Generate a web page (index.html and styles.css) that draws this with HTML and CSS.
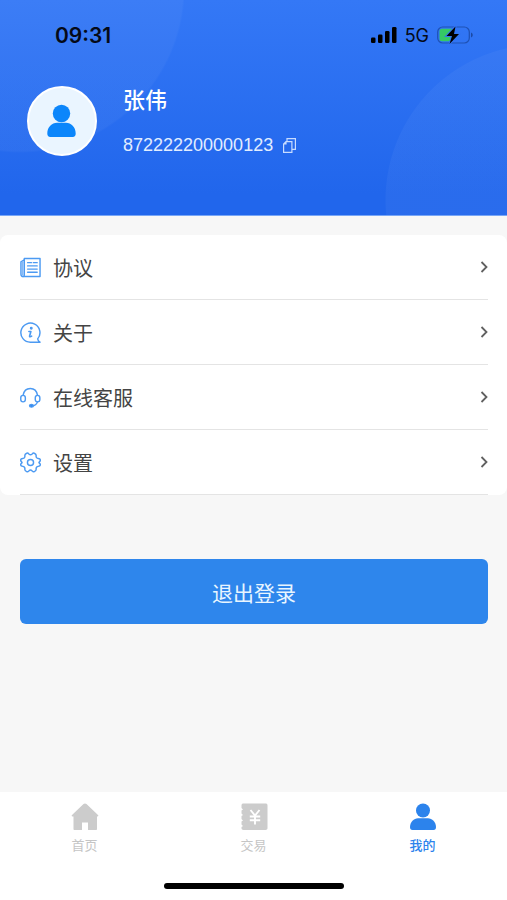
FILE: index.html
```html
<!DOCTYPE html>
<html lang="zh-CN">
<head>
<meta charset="utf-8">
<meta name="viewport" content="width=device-width, initial-scale=1">
<title>我的</title>
<link rel="stylesheet" href="styles.css">
</head>
<body>
<header class="hero">
  <div class="status">
    <span class="time">09:31</span>
    <div class="signals">
      <svg width="26" height="16" viewBox="0 0 26 16" aria-hidden="true">
        <rect x="0" y="10.500" width="4.500" height="5.500" rx="1.300"/><rect x="7" y="7.500" width="4.500" height="8.500" rx="1.300"/><rect x="14" y="4" width="4.500" height="12" rx="1.300"/><rect x="21" y="0" width="4.500" height="16" rx="1.300"/>
      </svg>
      <span class="network">5G</span>
      <svg width="36" height="18" viewBox="0 0 36 18" aria-hidden="true">
        <rect x=".7" y="1" width="31.600" height="16" rx="5" fill="none" stroke="#1f52b4" stroke-width="1.200"/>
        <path d="M5 2.800h11v12.400H5a2.500 2.500 0 0 1-2.500-2.500V5.300A2.500 2.500 0 0 1 5 2.800z" fill="#35c865"/>
        <path d="M34 6.500c2.300.8 2.300 4.200 0 5z" fill="#1c4aa5"/>
        <path d="M18.500.5 9.500 10h5.500l-2.500 8L22 8h-5z" stroke="#3273f2" stroke-width="2" paint-order="stroke"/>
      </svg>
    </div>
  </div>
  <div class="profile">
    <div class="avatar">
      <svg width="30" height="34" viewBox="0 0 30 34" aria-hidden="true"><circle cx="14.500" cy="9.500" r="8.700"/><path d="M.3 29.500C.3 23 5 18.800 10 18.800h9c5 0 9.700 4.200 9.700 10.700 0 2-1 3.500-3 3.500H3.300c-2 0-3-1.500-3-3.500z"/></svg>
    </div>
    <div class="identity">
      <h1 class="name">张伟</h1>
      <div class="account">
        <span>872222200000123</span>
        <button class="copy" type="button" aria-label="复制">
          <svg width="13" height="15" viewBox="0 0 13 15" aria-hidden="true"><path d="M3 3.600h5.900v10.800H.6V6z M.8 6H3V3.800M4 3.500V.6h8.400v10.800H9"/></svg>
        </button>
      </div>
    </div>
  </div>
</header>
<main class="content">
  <nav class="menu">
    <a class="row" href="#agreement">
      <svg class="icon" viewBox="0 0 22 22" aria-hidden="true"><path d="M4.500 1.500H21v19H3.500C1.800 20.500 1 19.500 1 18V5l3.500-2z"/><path d="M4.500 3v16c0 1-.5 1.500-1.300 1.500"/><path d="M2.700 5.500v13" stroke="#85b9f6" stroke-width="2"/><path d="M8 5.900h4m2 0h4M8 9.300h10M8 12.700h10M8 16h10"/></svg>
      <span>协议</span>
      <svg class="chevron" viewBox="0 0 8 12" aria-hidden="true"><path d="m1.500 1 5 5-5 5"/></svg>
    </a>
    <a class="row" href="#about">
      <svg class="icon" viewBox="0 0 22 22" aria-hidden="true"><path d="M18.500 17.700A10 10 0 1 0 11 21.200h10c-1.400-.7-2.200-1.800-2.500-3.500z"/><circle cx="11.800" cy="6.500" r=".8" fill="#3c8ff0"/><path d="M9.300 10h2.100L10 15c0 .8 1 .6 2.200-.2" stroke-width="1.700"/></svg>
      <span>关于</span>
      <svg class="chevron" viewBox="0 0 8 12" aria-hidden="true"><path d="m1.500 1 5 5-5 5"/></svg>
    </a>
    <a class="row" href="#service">
      <svg class="icon" viewBox="0 0 22 22" aria-hidden="true"><path d="M3.300 8.500C4 4.300 6.800 1.500 10.800 1.500s6.800 2.800 7.500 7"/><rect x=".8" y="8.800" width="4.800" height="6.800" rx="2.400"/><rect x="16" y="8.800" width="4.800" height="6.800" rx="2.400"/><path d="M18.300 15.600c-.8 2.700-3 4-6 4.300"/><ellipse cx="12" cy="19.700" rx="2" ry="1.400" fill="#2c83ec"/></svg>
      <span>在线客服</span>
      <svg class="chevron" viewBox="0 0 8 12" aria-hidden="true"><path d="m1.500 1 5 5-5 5"/></svg>
    </a>
    <a class="row" href="#settings">
      <svg class="icon" viewBox="0 0 22 22" aria-hidden="true"><path d="M7 1.300c1-.5 1.800.2 2.300.8 1 1 2.400 1 3.400 0 .5-.6 1.300-1.300 2.300-.8 1.500.6 2.100 1.200 1.900 2.600-.2 1.500.7 2.700 2.200 2.900 1.500.2 2.200.8 2.200 1.700 0 1-.3 1.300-1 1.800-.6.400-.6.900 0 1.300.7.500 1 .8 1 1.800 0 .9-.7 1.500-2.200 1.700-1.500.2-2.400 1.400-2.200 2.900.2 1.400-.4 2-1.900 2.600-1 .5-1.800-.2-2.300-.8-1-1-2.400-1-3.400 0-.5.6-1.300 1.300-2.300.8-1.500-.6-2.100-1.200-1.900-2.600.2-1.500-.7-2.700-2.200-2.900C1.400 14.900.7 14.300.7 13.400c0-1 .3-1.300 1-1.800.6-.4.600-.9 0-1.300-.7-.5-1-.8-1-1.800 0-.9.700-1.500 2.200-1.700 1.500-.2 2.400-1.400 2.200-2.900C4.900 2.500 5.500 1.900 7 1.300z"/><circle cx="11" cy="11" r="3.200"/></svg>
      <span>设置</span>
      <svg class="chevron" viewBox="0 0 8 12" aria-hidden="true"><path d="m1.500 1 5 5-5 5"/></svg>
    </a>
  </nav>
  <button class="logout" type="button">退出登录</button>
</main>
<footer class="footer">
  <nav class="tabs">
    <a class="tab" href="#home">
      <svg width="28" height="28" viewBox="0 0 28 28" aria-hidden="true"><path d="M14 .5c.6 0 1 .2 1.500.6L27 12c.6.700.4 1.500-.6 1.500H26V26c0 .7-.4 1-1 1h-8v-7.500h-6V27H3.500c-.7 0-1-.3-1-1V13.500h-.9c-1 0-1.200-.8-.6-1.500L12.500 1.100C13 .7 13.400.5 14 .5z"/></svg>
      <span>首页</span>
    </a>
    <a class="tab" href="#trade">
      <svg width="28" height="28" viewBox="0 0 28 28" aria-hidden="true"><path d="M3.500.5h22c1.200 0 2 .6 2 1.800v23c0 1.200-.8 1.700-2 1.700h-22c-1.200 0-2-.5-2-1.700V24l1.500-1-1.500-1.500v-3L3 17.500 1.500 16v-3L3 12l-1.500-1.500v-3L3 6.500 1.500 5V2.300C1.500 1.100 2.300.5 3.500.5z"/><path d="m10.500 7 4.500 5.500L19.500 7M15 12.500v9M9.800 13.500h10.400M9.800 17.200h10.400" fill="none" stroke="#fff" stroke-width="1.900"/></svg>
      <span>交易</span>
    </a>
    <a class="tab active" href="#mine" aria-current="page">
      <svg width="28" height="28" viewBox="0 0 28 28" aria-hidden="true"><circle cx="14" cy="7.500" r="7"/><path d="M1 24C1 19 5 15.300 9 15.300h10c4 0 8 3.700 8 8.700 0 2-.8 3-2.500 3h-21C1.800 27 1 26 1 24z"/></svg>
      <span>我的</span>
    </a>
  </nav>
  <div class="home-bar"></div>
</footer>
</body>
</html>
```
FILE: styles.css
```css
* {
  box-sizing: border-box;
}

body {
  margin: 0;
  min-height: 100vh;
  display: flex;
  flex-direction: column;
  background: #f7f7f7;
  color: #444;
  font-family: "Liberation Sans", "Noto Sans CJK SC", sans-serif;
}

a {
  color: inherit;
  text-decoration: none;
}

button {
  border: 0;
  padding: 0;
  font: inherit;
  cursor: pointer;
}

.hero {
  height: 216px;
  padding: 20px 34px 0 27px;
  color: #fff;
  border-bottom: 1px solid #78a6f6;
  background:
    radial-gradient(circle at 20px -12px, rgba(255, 255, 255, 0.04) 163px, transparent 165px),
    radial-gradient(circle at calc(100% + 34px) 200px, rgba(255, 255, 255, 0.04) 155px, transparent 156px),
    linear-gradient(#3478f6, #2166ec 90%);
}

.status {
  display: flex;
  align-items: center;
  justify-content: space-between;
  height: 30px;
  padding-left: 28px;
  color: #050a18;
  font-family: Inter, sans-serif;
}

.time {
  font-size: 21px;
  font-weight: 600;
}

.signals {
  display: flex;
  align-items: center;
  gap: 8px;
}

.network {
  font-size: 18px;
}

.profile {
  display: flex;
  align-items: center;
  gap: 26px;
  margin-top: 35px;
}

.avatar {
  display: grid;
  place-items: center;
  width: 70px;
  height: 70px;
  border: 2px solid #fff;
  border-radius: 50%;
  background: #eaf5ff;
  fill: #0c86fb;
}

.identity {
  display: flex;
  flex-direction: column;
  gap: 16px;
}

.name {
  margin: 0;
  font-size: 22px;
  line-height: 32px;
  font-weight: 500;
}

.account {
  display: flex;
  align-items: center;
  gap: 10px;
  font-size: 18px;
  line-height: 24px;
  color: #e2edff;
}

.copy {
  display: flex;
  background: none;
}

.copy svg {
  fill: none;
  stroke: #c8dcff;
  stroke-width: 1.2;
}

.content {
  flex: 1;
  padding-top: 19px;
}

.menu {
  padding: 0 19px 0 20px;
  border-radius: 8px;
  background: #fff;
}

.row {
  display: flex;
  align-items: center;
  gap: 12px;
  height: 65px;
  border-bottom: 1px solid #e4e4e4;
  font-size: 20px;
}

.icon {
  width: 21px;
  height: 21px;
  fill: none;
  stroke: #4c9af2;
  stroke-width: 1.5;
  stroke-linecap: round;
  stroke-linejoin: round;
}

.chevron {
  width: 8px;
  height: 12px;
  margin-left: auto;
  fill: none;
  stroke: #606060;
  stroke-width: 1.8;
}

.logout {
  display: block;
  width: calc(100% - 39px);
  height: 65px;
  margin: 64px 19px 0 20px;
  border-radius: 6px;
  background: #2e86ec;
  color: #e8f5ff;
  font-size: 21px;
}

.footer {
  display: flex;
  flex-direction: column;
  align-items: center;
  height: 108px;
  background: #fff;
}

.tabs {
  display: grid;
  grid-template-columns: repeat(3, 1fr);
  width: 100%;
  height: 91px;
  padding-top: 11px;
}

.tab {
  display: flex;
  flex-direction: column;
  align-items: center;
  gap: 5px;
  color: #c5c5c5;
  fill: #ccc;
  font-size: 13px;
  line-height: 20px;
}

.tab.active {
  color: #2c83ec;
  fill: #2c83ec;
  font-weight: 500;
}

.home-bar {
  width: 180px;
  height: 6px;
  border-radius: 3px;
  background: #000;
}
```
